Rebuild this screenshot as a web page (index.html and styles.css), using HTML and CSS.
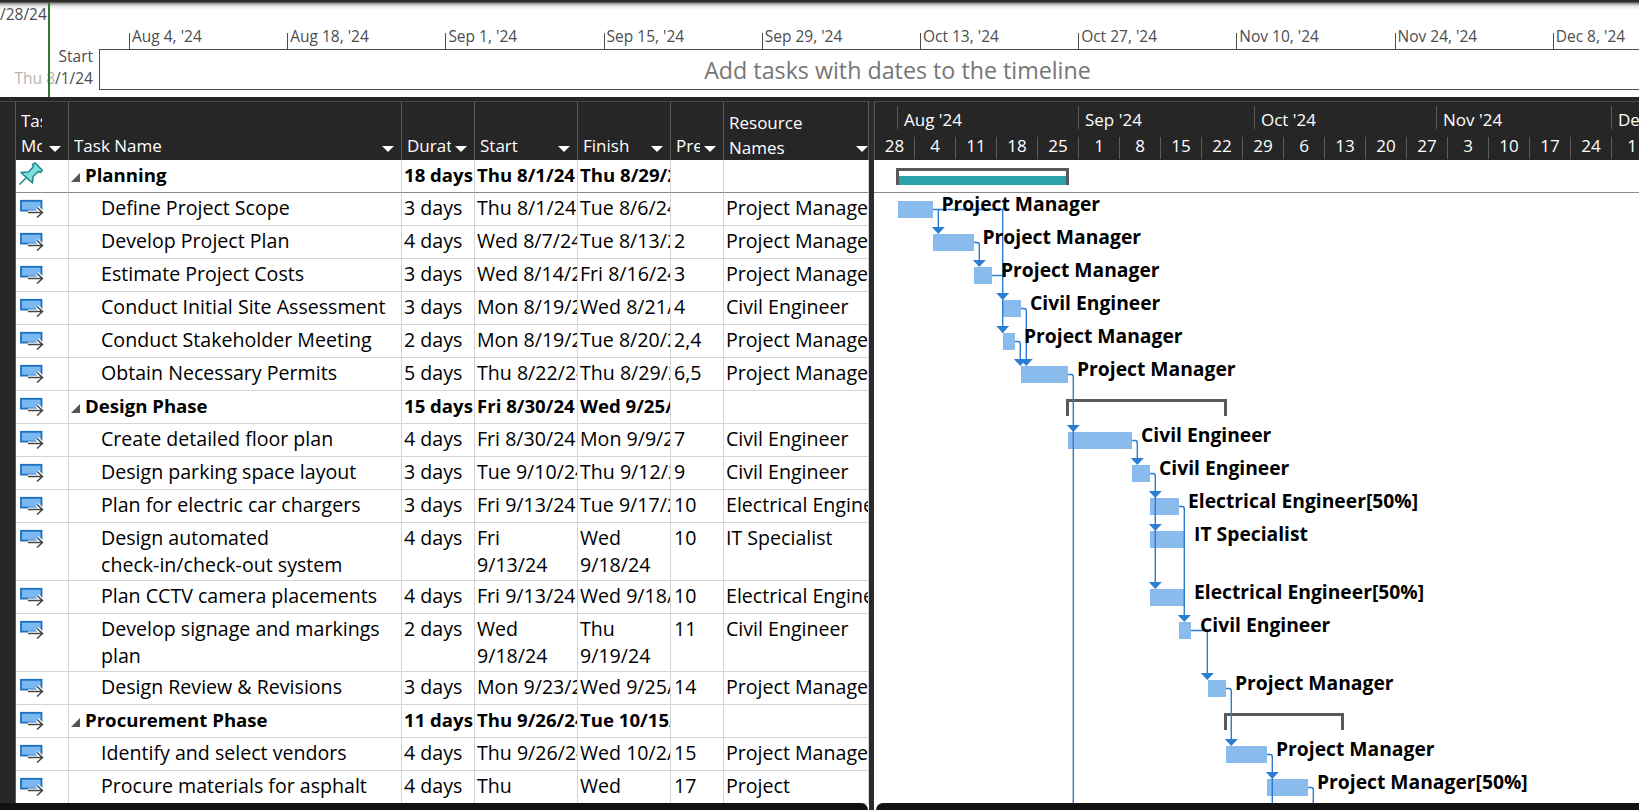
FILE: index.html
```html
<!DOCTYPE html>
<html lang="en">
<head>
    <meta charset="UTF-8">
    <title>Project Gantt Chart</title>
    <link rel="stylesheet" href="styles.css">
</head>
<body>
    <!-- icons used by the sheet -->
    <svg class="defs" width="0" height="0">
        <symbol id="icon-auto" viewBox="0 0 24 20">
            <rect x="1" y="1.8" width="20.5" height="9.8" fill="#7ab8f2" stroke="#1c70c0" stroke-width="1.8"/>
            <path d="M8 13.5H22M17 8.5l5.5 5-5.5 5" fill="none" stroke="#fff" stroke-width="4"/>
            <path d="M8 13.5H22M17 8.5l5.5 5-5.5 5" fill="none" stroke="#444" stroke-width="1.5"/>
        </symbol>
        <symbol id="icon-pin" viewBox="0 0 24 24">
            <path d="M2 10.5L9.5 10 14.5 4.5 13.5 2.5 16 .8 23.5 8.5 21.5 10.5 19.5 9.5 14 14.5 13.5 21z" fill="#7fdedb" stroke="#17878c" stroke-width="1.5" stroke-linejoin="round"/>
            <path d="M.5 22.5L7.5 15.5" stroke="#17878c" stroke-width="1.5"/>
        </symbol>
        <symbol id="icon-collapse" viewBox="0 0 9 9">
            <path d="M0 9L9 0V9z" fill="#555"/>
        </symbol>
    </svg>

    <!-- Timeline strip -->
    <section class="timeline">
        <div class="today-line"></div>
        <div class="tl-date">/28/24</div>
        <div class="tl-scale">
            <span class="tl-tick">Aug 4, '24</span>
            <span class="tl-tick">Aug 18, '24</span>
            <span class="tl-tick">Sep 1, '24</span>
            <span class="tl-tick">Sep 15, '24</span>
            <span class="tl-tick">Sep 29, '24</span>
            <span class="tl-tick">Oct 13, '24</span>
            <span class="tl-tick">Oct 27, '24</span>
            <span class="tl-tick">Nov 10, '24</span>
            <span class="tl-tick">Nov 24, '24</span>
            <span class="tl-tick">Dec 8, '24</span>
        </div>
        <div class="tl-body">
            <div class="tl-ends">
                <div>Start</div>
                <div><span class="tl-faded">Thu 8</span>/1/24</div>
            </div>
            <div class="tl-box">Add tasks with dates to the timeline</div>
        </div>
    </section>

    <main class="panes">
        <!-- Task sheet -->
        <section class="sheet">
            <table class="task-table">
                <colgroup>
                    <col class="col-strip"><col class="col-mode"><col class="col-name"><col class="col-dur">
                    <col class="col-start"><col class="col-finish"><col class="col-pred"><col class="col-res">
                </colgroup>
                <thead>
                    <tr>
                        <th class="strip"></th>
                        <th><div class="th-inner th-mode"><span class="th-label">Task<br>Mode</span><i class="caret"></i></div></th>
                        <th><div class="th-inner"><span class="th-label">Task Name</span><i class="caret"></i></div></th>
                        <th><div class="th-inner"><span class="th-label">Duration</span><i class="caret"></i></div></th>
                        <th><div class="th-inner"><span class="th-label">Start</span><i class="caret"></i></div></th>
                        <th><div class="th-inner"><span class="th-label">Finish</span><i class="caret"></i></div></th>
                        <th><div class="th-inner"><span class="th-label">Predecessors</span><i class="caret"></i></div></th>
                        <th><div class="th-inner th-res"><span class="th-label">Resource<br>Names</span><i class="caret"></i></div></th>
                    </tr>
                </thead>
                <tbody>
                    <tr class="summary first">
                        <td class="strip"></td><td class="mode"><svg class="pin"><use href="#icon-pin"/></svg></td>
                        <td class="name"><svg class="collapse"><use href="#icon-collapse"/></svg>Planning</td>
                        <td>18 days</td><td>Thu 8/1/24</td><td>Thu 8/29/24</td><td class="pred"></td><td></td>
                    </tr>
                    <tr>
                        <td class="strip"></td><td class="mode"><svg class="auto"><use href="#icon-auto"/></svg></td>
                        <td class="name">Define Project Scope</td>
                        <td>3 days</td><td>Thu 8/1/24</td><td>Tue 8/6/24</td><td class="pred"></td><td>Project Manager</td>
                    </tr>
                    <tr>
                        <td class="strip"></td><td class="mode"><svg class="auto"><use href="#icon-auto"/></svg></td>
                        <td class="name">Develop Project Plan</td>
                        <td>4 days</td><td>Wed 8/7/24</td><td>Tue 8/13/24</td><td class="pred">2</td><td>Project Manager</td>
                    </tr>
                    <tr>
                        <td class="strip"></td><td class="mode"><svg class="auto"><use href="#icon-auto"/></svg></td>
                        <td class="name">Estimate Project Costs</td>
                        <td>3 days</td><td>Wed 8/14/24</td><td>Fri 8/16/24</td><td class="pred">3</td><td>Project Manager</td>
                    </tr>
                    <tr>
                        <td class="strip"></td><td class="mode"><svg class="auto"><use href="#icon-auto"/></svg></td>
                        <td class="name">Conduct Initial Site Assessment</td>
                        <td>3 days</td><td>Mon 8/19/24</td><td>Wed 8/21/24</td><td class="pred">4</td><td>Civil Engineer</td>
                    </tr>
                    <tr>
                        <td class="strip"></td><td class="mode"><svg class="auto"><use href="#icon-auto"/></svg></td>
                        <td class="name">Conduct Stakeholder Meeting</td>
                        <td>2 days</td><td>Mon 8/19/24</td><td>Tue 8/20/24</td><td class="pred">2,4</td><td>Project Manager</td>
                    </tr>
                    <tr>
                        <td class="strip"></td><td class="mode"><svg class="auto"><use href="#icon-auto"/></svg></td>
                        <td class="name">Obtain Necessary Permits</td>
                        <td>5 days</td><td>Thu 8/22/24</td><td>Thu 8/29/24</td><td class="pred">6,5</td><td>Project Manager</td>
                    </tr>
                    <tr class="summary">
                        <td class="strip"></td><td class="mode"><svg class="auto"><use href="#icon-auto"/></svg></td>
                        <td class="name"><svg class="collapse"><use href="#icon-collapse"/></svg>Design Phase</td>
                        <td>15 days</td><td>Fri 8/30/24</td><td>Wed 9/25/24</td><td class="pred"></td><td></td>
                    </tr>
                    <tr>
                        <td class="strip"></td><td class="mode"><svg class="auto"><use href="#icon-auto"/></svg></td>
                        <td class="name">Create detailed floor plan</td>
                        <td>4 days</td><td>Fri 8/30/24</td><td>Mon 9/9/24</td><td class="pred">7</td><td>Civil Engineer</td>
                    </tr>
                    <tr>
                        <td class="strip"></td><td class="mode"><svg class="auto"><use href="#icon-auto"/></svg></td>
                        <td class="name">Design parking space layout</td>
                        <td>3 days</td><td>Tue 9/10/24</td><td>Thu 9/12/24</td><td class="pred">9</td><td>Civil Engineer</td>
                    </tr>
                    <tr>
                        <td class="strip"></td><td class="mode"><svg class="auto"><use href="#icon-auto"/></svg></td>
                        <td class="name">Plan for electric car chargers</td>
                        <td>3 days</td><td>Fri 9/13/24</td><td>Tue 9/17/24</td><td class="pred">10</td><td>Electrical Engineer[50%]</td>
                    </tr>
                    <tr class="tall">
                        <td class="strip"></td><td class="mode"><svg class="auto"><use href="#icon-auto"/></svg></td>
                        <td class="name">Design automated<br>check-in/check-out system</td>
                        <td>4 days</td><td>Fri<br>9/13/24</td><td>Wed<br>9/18/24</td><td class="pred">10</td><td>IT Specialist</td>
                    </tr>
                    <tr>
                        <td class="strip"></td><td class="mode"><svg class="auto"><use href="#icon-auto"/></svg></td>
                        <td class="name">Plan CCTV camera placements</td>
                        <td>4 days</td><td>Fri 9/13/24</td><td>Wed 9/18/24</td><td class="pred">10</td><td>Electrical Engineer[50%]</td>
                    </tr>
                    <tr class="tall">
                        <td class="strip"></td><td class="mode"><svg class="auto"><use href="#icon-auto"/></svg></td>
                        <td class="name">Develop signage and markings<br>plan</td>
                        <td>2 days</td><td>Wed<br>9/18/24</td><td>Thu<br>9/19/24</td><td class="pred">11</td><td>Civil Engineer</td>
                    </tr>
                    <tr>
                        <td class="strip"></td><td class="mode"><svg class="auto"><use href="#icon-auto"/></svg></td>
                        <td class="name">Design Review &amp; Revisions</td>
                        <td>3 days</td><td>Mon 9/23/24</td><td>Wed 9/25/24</td><td class="pred">14</td><td>Project Manager</td>
                    </tr>
                    <tr class="summary">
                        <td class="strip"></td><td class="mode"><svg class="auto"><use href="#icon-auto"/></svg></td>
                        <td class="name"><svg class="collapse"><use href="#icon-collapse"/></svg>Procurement Phase</td>
                        <td>11 days</td><td>Thu 9/26/24</td><td>Tue 10/15/24</td><td class="pred"></td><td></td>
                    </tr>
                    <tr>
                        <td class="strip"></td><td class="mode"><svg class="auto"><use href="#icon-auto"/></svg></td>
                        <td class="name">Identify and select vendors</td>
                        <td>4 days</td><td>Thu 9/26/24</td><td>Wed 10/2/24</td><td class="pred">15</td><td>Project Manager</td>
                    </tr>
                    <tr>
                        <td class="strip"></td><td class="mode"><svg class="auto"><use href="#icon-auto"/></svg></td>
                        <td class="name">Procure materials for asphalt</td>
                        <td>4 days</td><td>Thu</td><td>Wed</td><td class="pred">17</td><td>Project</td>
                    </tr>
                </tbody>
            </table>
            <div class="bottom-bar bottom-left"></div>
        </section>

        <div class="splitter"></div>

        <!-- Gantt chart -->
        <section class="chart">
            <div class="chart-head">
                <div class="months">
                    <span class="month month-lead"></span>
                    <span class="month month-aug">Aug '24</span>
                    <span class="month month-sep">Sep '24</span>
                    <span class="month month-oct">Oct '24</span>
                    <span class="month month-nov">Nov '24</span>
                    <span class="month">Dec '24</span>
                </div>
                <div class="weeks">
                    <span class="week-first">28</span><span>4</span><span>11</span><span>18</span><span>25</span>
                    <span>1</span><span>8</span><span>15</span><span>22</span><span>29</span>
                    <span>6</span><span>13</span><span>20</span><span>27</span><span>3</span>
                    <span>10</span><span>17</span><span>24</span><span>1</span>
                </div>
            </div>
            <!-- viewBox uses screen coordinates, so x/y read straight off the timescale and rows -->
            <svg class="gantt" viewBox="874 160 765 650" width="765" height="650">
                <line class="row-line" x1="874" y1="192.5" x2="1639" y2="192.5"/>

                <rect class="summary-fill" x="899" y="176" width="167" height="9"/>
                <path class="bracket" d="M897.5 185V169.5H1067.5V185"/>
                <path class="bracket" d="M1067.5 416V400.5H1225.5V416"/>
                <path class="bracket" d="M1225.5 730V714.5H1342.5V730"/>

                <rect class="bar" x="898" y="201" width="35" height="17"/>
                <rect class="bar" x="933" y="234" width="41" height="17"/>
                <rect class="bar" x="974" y="267" width="18" height="17"/>
                <rect class="bar" x="1003" y="300" width="18" height="17"/>
                <rect class="bar" x="1003" y="333" width="12" height="17"/>
                <rect class="bar" x="1021" y="366" width="47" height="17"/>
                <rect class="bar" x="1068" y="432" width="64" height="17"/>
                <rect class="bar" x="1132" y="465" width="18" height="17"/>
                <rect class="bar" x="1150" y="498" width="29" height="17"/>
                <rect class="bar" x="1150" y="531" width="35" height="17"/>
                <rect class="bar" x="1150" y="589" width="35" height="17"/>
                <rect class="bar" x="1179" y="622" width="12" height="17"/>
                <rect class="bar" x="1208" y="680" width="18" height="17"/>
                <rect class="bar" x="1226" y="746" width="41" height="17"/>
                <rect class="bar" x="1267" y="779" width="41" height="17"/>

                <!-- links between tasks -->
                <path class="link" d="M933 209.5H1002.7V333"/>
                <path class="link" d="M938.3 209.5V228"/>
                <path class="link" d="M974 242.5h3q2.3 0 2.3 2.3V261"/>
                <path class="link" d="M992 275.5H1002.7"/>
                <path class="link" d="M1021 308.5h3q2.3 0 2.3 2.3V360"/>
                <path class="link" d="M1015 341.5h3q2.3 0 2.3 2.3V360"/>
                <path class="link" d="M1068 374.5h3q2.3 0 2.3 2.3V803"/>
                <path class="link" d="M1132 440.5h3q2.3 0 2.3 2.3V459"/>
                <path class="link" d="M1150 473.5h3q2.3 0 2.3 2.3V583"/>
                <path class="link" d="M1179 506.5h3q2.3 0 2.3 2.3V616"/>
                <path class="link" d="M1191 630.5H1207.3V674"/>
                <path class="link" d="M1226 688.5h3q2.3 0 2.3 2.3V740"/>
                <path class="link" d="M1267 754.5h3q2.3 0 2.3 2.3V803"/>
                <path class="link" d="M1308 787.5h3q2.3 0 2.3 2.3V803"/>

                <path class="arrow" d="M931.8 227h13l-6.5 7z"/>
                <path class="arrow" d="M972.8 260h13l-6.5 7z"/>
                <path class="arrow" d="M996.2 293h13l-6.5 7z"/>
                <path class="arrow" d="M996.2 326h13l-6.5 7z"/>
                <path class="arrow" d="M1013.8 359h13l-6.5 7z"/>
                <path class="arrow" d="M1019.8 359h13l-6.5 7z"/>
                <path class="arrow" d="M1066.8 425h13l-6.5 7z"/>
                <path class="arrow" d="M1130.8 458h13l-6.5 7z"/>
                <path class="arrow" d="M1148.8 491h13l-6.5 7z"/>
                <path class="arrow" d="M1148.8 524h13l-6.5 7z"/>
                <path class="arrow" d="M1148.8 582h13l-6.5 7z"/>
                <path class="arrow" d="M1177.8 615h13l-6.5 7z"/>
                <path class="arrow" d="M1200.8 673h13l-6.5 7z"/>
                <path class="arrow" d="M1224.8 739h13l-6.5 7z"/>
                <path class="arrow" d="M1265.8 772h13l-6.5 7z"/>

                <text class="bar-label" x="941.5" y="211">Project Manager</text>
                <text class="bar-label" x="982.5" y="244">Project Manager</text>
                <text class="bar-label" x="1001" y="277">Project Manager</text>
                <text class="bar-label" x="1030" y="310">Civil Engineer</text>
                <text class="bar-label" x="1024" y="343">Project Manager</text>
                <text class="bar-label" x="1077" y="376">Project Manager</text>
                <text class="bar-label" x="1141" y="442">Civil Engineer</text>
                <text class="bar-label" x="1159" y="475">Civil Engineer</text>
                <text class="bar-label" x="1188" y="508">Electrical Engineer[50%]</text>
                <text class="bar-label" x="1194" y="541">IT Specialist</text>
                <text class="bar-label" x="1194" y="599">Electrical Engineer[50%]</text>
                <text class="bar-label" x="1200" y="632">Civil Engineer</text>
                <text class="bar-label" x="1235" y="690">Project Manager</text>
                <text class="bar-label" x="1276" y="756">Project Manager</text>
                <text class="bar-label" x="1317" y="789">Project Manager[50%]</text>
            </svg>
            <div class="bottom-bar bottom-right"></div>
        </section>
    </main>
</body>
</html>
```

FILE: styles.css
```css
/* Page */
* {
    box-sizing: border-box;
}

body {
    margin: 0;
    width: 1639px;
    height: 810px;
    overflow: hidden;
    display: flex;
    flex-direction: column;
    background-color: white;
    font-family: "Open Sans", "Noto Sans", sans-serif;
}

.defs {
    position: absolute;
}

/* Timeline strip */
.timeline {
    position: relative;
    height: 97px;
    flex: none;
    background: linear-gradient(#2b2b2b 2px, #8a8a8a 3px, #e6e6e6 6px, #fff 10px) no-repeat;
    background-size: 100% 10px;
    color: #4d4d4d;
    font-size: 15.5px;
}

.today-line {
    position: absolute;
    left: 48px;
    top: 3px;
    bottom: 0;
    width: 2px;
    background-color: #2f7a2f;
}

.tl-date {
    height: 33px;
    padding-top: 3px;
    line-height: 22px;
}

.tl-scale {
    display: flex;
    height: 16px;
    padding-left: 129px;
    white-space: nowrap;
}

.tl-tick {
    flex: none;
    width: 158.2px;
    border-left: 1px solid #4d4d4d;
    padding-left: 2px;
    line-height: 6px;
}

.tl-body {
    display: flex;
    height: 41px;
}

.tl-ends {
    width: 99px;
    flex: none;
    margin-top: -4px;
    padding-right: 6px;
    text-align: right;
    line-height: 22px;
}

.tl-faded {
    color: #b3b3b3;
}

.tl-box {
    flex: 1;
    display: flex;
    align-items: center;
    justify-content: center;
    padding-left: 56px;
    border: 1px solid #4d4d4d;
    border-right: none;
    color: #767676;
    font-size: 23.25px;
}

/* Sheet and chart panes */
.panes {
    flex: 1;
    display: flex;
    min-height: 0;
    border-top: 4px solid #262626;
}

.sheet {
    position: relative;
    width: 869px;
    flex: none;
    overflow: hidden;
}

.splitter {
    width: 5px;
    flex: none;
    background-color: #2b2b2b;
}

.chart {
    position: relative;
    flex: 1;
    min-width: 0;
    overflow: hidden;
}

.bottom-bar {
    position: absolute;
    bottom: 0;
    height: 7px;
    background-color: #111;
}

.bottom-left {
    left: 0;
    right: 1px;
    border-top-right-radius: 8px;
}

.bottom-right {
    left: 2px;
    right: 0;
    border-top-left-radius: 8px;
}

/* Task table */
.task-table {
    width: 869px;
    table-layout: fixed;
    border-collapse: separate;
    border-spacing: 0;
    font-size: 19.6px;
    color: black;
}

.col-strip { width: 16px; }
.col-mode { width: 53px; }
.col-name { width: 333px; }
.col-dur { width: 73px; }
.col-start { width: 103px; }
.col-finish { width: 93px; }
.col-pred { width: 53px; }
.col-res { width: 145px; }

.task-table th {
    height: 59px;
    padding: 0;
    vertical-align: bottom;
    text-align: left;
    font-weight: normal;
    font-size: 17px;
    color: white;
    background-color: #262626;
    border-top: 1px solid #454545;
    border-right: 1px solid #5a5a5a;
}

.th-inner {
    display: flex;
    align-items: flex-end;
    padding: 0 7px 2px 5px;
    line-height: 25px;
    white-space: nowrap;
}

.th-res {
    padding-right: 0;
    padding-bottom: 0;
}

.th-label {
    flex: 1;
    min-width: 0;
    overflow: hidden;
}

.caret {
    flex: none;
    width: 0;
    height: 0;
    margin: 0 0 6px 4px;
    border-top: 6px solid white;
    border-left: 6px solid transparent;
    border-right: 6px solid transparent;
}

.th-mode .caret {
    margin-left: 7px;
}

.th-res .caret {
    margin-bottom: 8px;
}

.task-table td {
    height: 33px;
    padding: 1px 0 0 2px;
    vertical-align: top;
    line-height: 27px;
    white-space: nowrap;
    overflow: hidden;
    border-right: 1px solid #d4d4d4;
    border-bottom: 1px solid #d4d4d4;
}

.task-table tr.tall td {
    height: 58px;
}

.task-table td.strip,
.task-table th.strip {
    background-color: #262626;
    border-right: 1px solid #5a5a5a;
    border-bottom: none;
}

.task-table td.mode {
    padding: 0;
}

.task-table td.name {
    padding-left: 32px;
}

.task-table td.pred {
    padding-left: 3px;
}

.task-table tr.summary td {
    font-size: 18.6px;
    font-weight: bold;
}

.task-table tr.summary td.name {
    padding-left: 2px;
}

.task-table tr.first td {
    border-bottom-color: #8c8c8c;
}

.auto {
    display: block;
    width: 24px;
    height: 20px;
    margin: 6px 0 0 4px;
}

.pin {
    display: block;
    width: 24px;
    height: 24px;
    margin: 2px 0 0 3px;
}

.collapse {
    width: 9px;
    height: 9px;
    margin-right: 5px;
}

/* Chart timescale */
.chart-head {
    height: 59px;
    background-color: #262626;
    border-top: 1px solid #454545;
    border-left: 1px solid #5a5a5a;
    color: white;
    white-space: nowrap;
    overflow: hidden;
}

.months {
    display: flex;
    height: 23px;
    margin-top: 4px;
    font-size: 17px;
}

.month {
    flex: none;
    padding-left: 6px;
    line-height: 28px;
    border-left: 1px solid #5a5a5a;
}

.month-lead { width: 22px; border-left: none; }
.month-aug { width: 181px; }
.month-sep { width: 176px; }
.month-oct { width: 182px; }
.month-nov { width: 175px; }

.weeks {
    display: flex;
    height: 22px;
    margin-top: 8px;
    font-size: 17px;
}

.weeks span {
    flex: none;
    width: 41px;
    text-align: center;
    line-height: 18px;
    border-right: 1px solid #5a5a5a;
}

.weeks .week-first {
    width: 40px;
}

/* Gantt bars */
.gantt {
    display: block;
}

.row-line {
    stroke: #8c8c8c;
    stroke-width: 1;
}

.bar {
    fill: #8abbed;
}

.summary-fill {
    fill: #2ca3aa;
}

.bracket {
    fill: none;
    stroke: #595959;
    stroke-width: 3;
}

.link {
    fill: none;
    stroke: #2b7cd3;
    stroke-width: 1.4;
}

.arrow {
    fill: #2b7cd3;
}

.bar-label {
    font-size: 19.3px;
    font-weight: bold;
    fill: black;
}
```
